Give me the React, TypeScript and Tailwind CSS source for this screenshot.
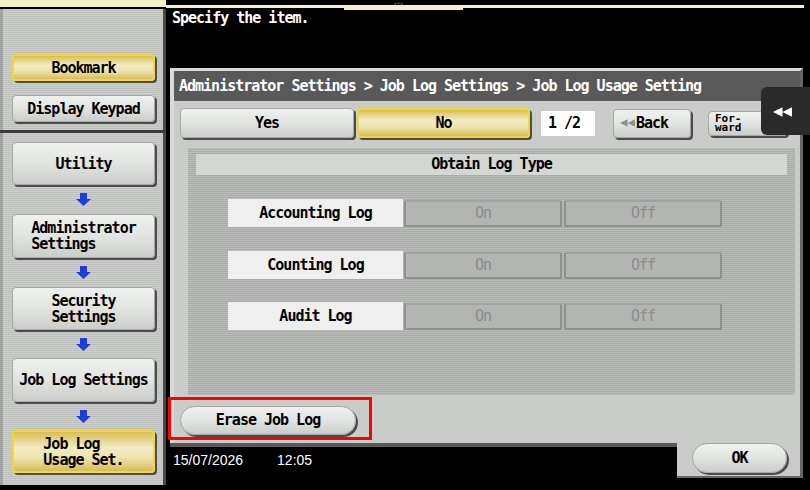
import React from "react";

const STRIPE_SIDE =
  "bg-[repeating-linear-gradient(to_bottom,#cdcfcd_0px,#cdcfcd_1px,#bec0be_1px,#bec0be_2px)]";
const STRIPE_BODY =
  "bg-[repeating-linear-gradient(to_bottom,#bbbdbb_0px,#bbbdbb_1px,#a9aba9_1px,#a9aba9_2px)]";

const GRAY_BTN =
  "bg-[linear-gradient(to_bottom,#eff1ef,#e2e4e2_50%,#cbcdcb)] border border-[#a6a8a6] shadow-[2px_2px_0_#4c4c4c]";
const YELLOW_BTN =
  "bg-[linear-gradient(to_bottom,#d8be54,#f2ebc4_40%,#eee4b1_65%,#d6bd5a)] border-2 border-[#f1d838] shadow-[2px_2px_0_#4c4c4c]";

function DownArrow() {
  return (
    <svg width="15" height="13" viewBox="0 0 15 13">
      <path d="M4 0h7v6h4l-7.5 7L0 6h4z" fill="#1c3fdc" />
    </svg>
  );
}

function DoubleLeft({ color, w, h }: { color: string; w: number; h: number }) {
  return (
    <svg width={w} height={h} viewBox="0 0 20 10">
      <path d="M10 0v10L0 5zM20 0v10L10 5z" fill={color} />
    </svg>
  );
}

function SideButton({
  children,
  h,
  yellow,
}: {
  children: React.ReactNode;
  h: string;
  yellow?: boolean;
}) {
  return (
    <div
      className={`w-[143px] ${h} rounded-[4px] flex items-center justify-center ${
        yellow ? YELLOW_BTN : GRAY_BTN
      }`}
    >
      <div className="text-left leading-[16px]">{children}</div>
    </div>
  );
}

function ArrowSlot({ h }: { h: string }) {
  return (
    <div className={`w-[143px] ${h} flex items-center justify-center`}>
      <DownArrow />
    </div>
  );
}

function LogRow({ label, top }: { label: string; top: string }) {
  return (
    <div className={`flex items-center ${top} ml-[32px]`}>
      <div className="w-[175px] h-[28px] bg-[#efefef] flex items-center justify-center">
        {label}
      </div>
      <div className="ml-[1px] w-[158px] h-[27px] bg-[#b3b5b3] border-2 border-[#8f918f] border-t-[#a2a4a2] rounded-[2px] flex items-center justify-center font-normal text-[#8a8c8a]">
        On
      </div>
      <div className="ml-[2px] w-[158px] h-[27px] bg-[#b3b5b3] border-2 border-[#8f918f] border-t-[#a2a4a2] rounded-[2px] flex items-center justify-center font-normal text-[#8a8c8a]">
        Off
      </div>
    </div>
  );
}

export default function App() {
  return (
    <div className="w-[810px] h-[490px] bg-black flex relative overflow-hidden font-['DejaVu_Sans_Mono',monospace] font-bold text-[15px] tracking-[-1px] text-black">
      {/* left rail */}
      <div className="w-[166px] shrink-0 flex flex-col">
        <div className="h-[7px] bg-[#f4f0c9]" />
        <div className="h-[2px]" />
        <div
          className={`h-[121px] border-l-[3px] border-r-[3px] border-l-[#a2a4a2] border-r-[#4a4a4a] ${STRIPE_SIDE} pt-[45px] pl-[9px] flex flex-col gap-[14px]`}
        >
          <SideButton h="h-[27px]" yellow>
            Bookmark
          </SideButton>
          <SideButton h="h-[27px]">Display Keypad</SideButton>
        </div>
        <div className="h-[3px] bg-[#3c3c3c]" />
        <div
          className={`h-[352px] border-l-[3px] border-r-[3px] border-l-[#a2a4a2] border-r-[#4a4a4a] ${STRIPE_SIDE} pt-[9px] pl-[9px] flex flex-col`}
        >
          <SideButton h="h-[43px]">Utility</SideButton>
          <ArrowSlot h="h-[29px]" />
          <SideButton h="h-[44px]">
            Administrator
            <br />
            Settings
          </SideButton>
          <ArrowSlot h="h-[29px]" />
          <SideButton h="h-[43px]">
            Security
            <br />
            Settings
          </SideButton>
          <ArrowSlot h="h-[28px]" />
          <SideButton h="h-[44px]">Job Log Settings</SideButton>
          <ArrowSlot h="h-[28px]" />
          <SideButton h="h-[43px]" yellow>
            Job Log
            <br />
            Usage Set.
          </SideButton>
        </div>
      </div>

      {/* main area */}
      <div className="flex-1 flex flex-col">
        <div className="h-[68px] flex flex-col">
          <div className="mt-[5px] h-[3px] bg-[#f4f0c9] mr-[6px]" />
          <div className="pl-[6px] mt-[2px] text-white leading-[17px]">Specify the item.</div>
        </div>

        <div className="ml-[4px] w-[633px] flex flex-col">
          <div className="h-[375px] bg-[#c9ccc8] border-l-[4px] border-t-[3px] border-l-[#d7dad7] border-t-[#d7dad7] border-r-[3px] border-r-[#666666] flex flex-col">
            <div className="h-[30px] bg-[#595959] text-white pl-[5px] flex items-center">
              Administrator Settings &gt; Job Log Settings &gt; Job Log Usage Setting
            </div>

            <div className="mt-[7px] h-[30px] flex items-center">
              <div className={`ml-[6px] w-[174px] h-[30px] rounded-[4px] flex items-center justify-center ${GRAY_BTN}`}>
                Yes
              </div>
              <div className={`ml-[3px] w-[173px] h-[30px] rounded-[4px] flex items-center justify-center ${YELLOW_BTN}`}>
                No
              </div>
              <div className="ml-[11px] w-[54px] h-[25px] bg-white pl-[7px] flex items-center">1 /2</div>
              <div className={`ml-[18px] w-[78px] h-[29px] rounded-[4px] flex items-center pl-[6px] gap-[1px] ${GRAY_BTN}`}>
                <DoubleLeft color="#8e908e" w={15} h={10} />
                <span>Back</span>
              </div>
              <div className={`ml-[17px] w-[79px] h-[25px] rounded-[4px] flex items-center pl-[6px] ${GRAY_BTN}`}>
                <div className="text-[11px] tracking-[0px] leading-[9px]">
                  For-
                  <br />
                  ward
                </div>
              </div>
            </div>

            <div className={`mt-[10px] ml-[14px] mr-[5px] h-[247px] ${STRIPE_BODY} pt-[6px] px-[8px] rounded-br-[4px]`}>
              <div className="h-[21px] bg-[#d3d6d3] flex items-center justify-center">Obtain Log Type</div>
              <LogRow label="Accounting Log" top="mt-[24px]" />
              <LogRow label="Counting Log" top="mt-[24px]" />
              <LogRow label="Audit Log" top="mt-[23px]" />
            </div>

            <div
              className={`mt-[11px] ml-[6px] w-[176px] h-[29px] rounded-full flex items-center justify-center ${GRAY_BTN}`}
            >
              Erase Job Log
            </div>
          </div>

          <div className="h-[35px] flex">
            <div className="flex-1 border-t-[4px] border-[#5a5a5a] bg-black text-white font-['Liberation_Sans',Arial,sans-serif] font-normal text-[14px] tracking-normal leading-[16px] pl-[3px] pt-[5px] flex">
              <span>15/07/2026</span>
              <span className="ml-[34px]">12:05</span>
            </div>
            <div className="w-[126px] bg-[#c9ccc8] border-r-[3px] border-b-[2px] border-[#666666] pl-[15px]">
              <div className={`w-[95px] h-[30px] rounded-full flex items-center justify-center ${GRAY_BTN}`}>
                OK
              </div>
            </div>
          </div>
        </div>
      </div>

      {/* slide-out handle on top strip */}
      <div className="absolute left-[344px] top-[6px] w-[119px] h-[4px] bg-[#f4f0c9]" />
      <div className="absolute left-[394px] top-0 text-[5px] leading-[6px] tracking-normal font-normal text-[#9a9a9a]">
        «•»
      </div>

      {/* side panel tab */}
      <div className="absolute left-[761px] top-[87px] w-[49px] h-[48px] bg-[#2a2a2a] rounded-l-[6px] pl-[12px] pt-[20px]">
        <DoubleLeft color="#ffffff" w={19} h={10} />
      </div>

      {/* highlight frame */}
      <div className="absolute left-[168px] top-[397px] w-[204px] h-[43px] border-[3px] border-[#ff0000]" />
    </div>
  );
}
